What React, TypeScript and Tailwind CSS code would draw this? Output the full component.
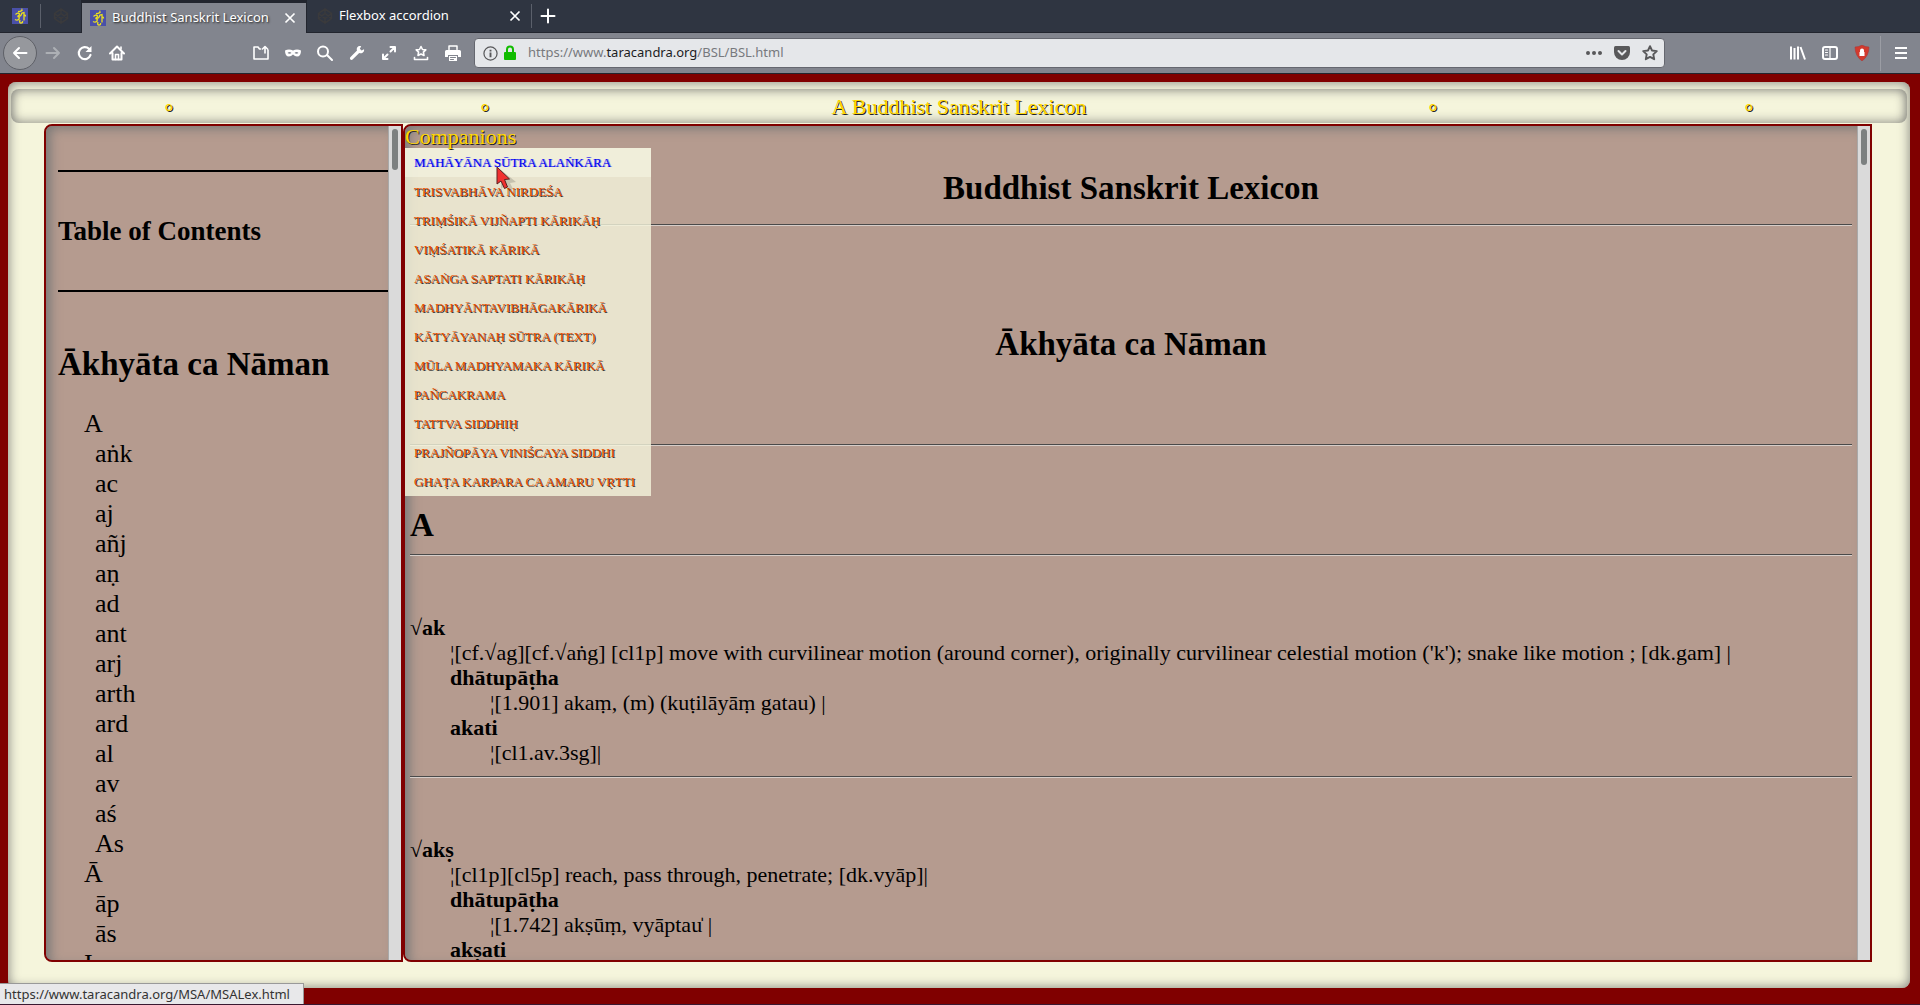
import { clsx } from 'clsx';
import type { ReactNode } from 'react';

const tocEntries = [
  { text: 'A', head: true },
  { text: 'aṅk' },
  { text: 'ac' },
  { text: 'aj' },
  { text: 'añj' },
  { text: 'aṇ' },
  { text: 'ad' },
  { text: 'ant' },
  { text: 'arj' },
  { text: 'arth' },
  { text: 'ard' },
  { text: 'al' },
  { text: 'av' },
  { text: 'aś' },
  { text: 'As' },
  { text: 'Ā', head: true },
  { text: 'āp' },
  { text: 'ās' },
  { text: 'I', head: true },
];

const companions = [
  'Mahāyāna Sūtra Alaṅkāra',
  'Trisvabhāva Nirdeśa',
  'Triṃśikā Vijñapti Kārikāḥ',
  'Viṃśatikā Kārikā',
  'Asaṅga Saptati Kārikāḥ',
  'Madhyāntavibhāgakārikā',
  'Kātyāyanaḥ Sūtra (Text)',
  'Mūla Madhyamaka Kārikā',
  'Pañcakrama',
  'Tattva Siddhiḥ',
  'Prajñopāya Viniścaya Siddhi',
  'Ghaṭa Karpara ca Amaru Vṛtti',
];

const entries = [
  {
    root: '√ak',
    meaning:
      "¦[cf.√ag][cf.√aṅg] [cl1p] move with curvilinear motion (around corner), originally curvilinear celestial motion ('k'); snake like motion ; [dk.gam] |",
    parts: [
      { term: 'dhātupāṭha', text: '¦[1.901] akaṃ, (m) (kuṭilāyāṃ gatau) |' },
      { term: 'akati', text: '¦[cl1.av.3sg]|' },
    ],
  },
  {
    root: '√akṣ',
    meaning: '¦[cl1p][cl5p] reach, pass through, penetrate; [dk.vyāp]|',
    parts: [
      { term: 'dhātupāṭha', text: '¦[1.742] akṣūṃ, vyāptau̍ |' },
      { term: 'akṣati' },
    ],
  },
];

const OmIcon = () => (
  <svg viewBox="0 0 16 16" className="size-4 shrink-0">
    <rect width="16" height="16" fill="#4a50a8" />
    <path
      d="M6 3.500q2.500.5 4.500-1.500M9.500.8l.8.8M3.500 6.500q2.500-2.500 4-.5 0 1.500-2 2.500 2.500 0 1.500 2.500-1.500 2-4 .5M7.500 8.500q1.500-.5 2.500-3.500l2-.5v8M12 7q1.500-.5 1.500 1.500M8 12q-1 3 1 3t1.500-2"
      fill="none"
      stroke="#ece01c"
      strokeWidth="1.300"
    />
  </svg>
);

const CodepenIcon = () => (
  <svg viewBox="0 0 16 16" className="size-4 shrink-0" fill="none" stroke="#3a3a3c" strokeWidth="1.500">
    <path d="M8 1l6.500 4.300v5.400L8 15l-6.500-4.300V5.300zM8 1v4.300M8 15v-4.300M1.500 5.300L8 10.500l6.500-5.200M1.500 10.700L8 5.500l6.500 5.200" />
  </svg>
);

const CloseIcon = () => (
  <svg viewBox="0 0 12 12" className="size-3" stroke="#fff" strokeWidth="1.700">
    <path d="M1.500 1.500l9 9M10.500 1.500l-9 9" />
  </svg>
);

const Icon = ({ children }: { children: ReactNode }) => (
  <svg
    viewBox="0 0 16 16"
    className="size-4"
    fill="none"
    stroke="currentColor"
    strokeWidth="2"
    strokeLinecap="round"
    strokeLinejoin="round"
  >
    {children}
  </svg>
);

const tools = [
  {
    label: 'Open file',
    icon: <path d="M7.500 4H6.500L5 2H1v12h14V5M9.500 4L12 1.500 14.500 4M12 2v6" strokeWidth="1.600" />,
  },
  {
    label: 'Private window',
    icon: (
      <path
        d="M0 5.500Q4 3.500 8 5.500q4-2 8 0 0 6-4 6-2 0-4-2-2 2-4 2-4 0-4-6zM2.500 8q2 1.500 4 0-2-2-4 0zM9.500 8q2 1.500 4 0-2-2-4 0z"
        fill="currentColor"
        fillRule="evenodd"
        stroke="none"
      />
    ),
  },
  { label: 'Find', icon: <path d="M11 6.500a5 5 0 1 1-10 0 5 5 0 0 1 10 0zM10.500 10.500L15 15" /> },
  {
    label: 'Developer',
    icon: (
      <path
        d="M15 4.200l-2.400 1.300-1.800-1.700 1.400-2.600C9.500.3 7 2.500 8 5.500L1.300 12.200c-1.300 1.500.8 3.700 2.300 2.300L10.200 8c3 1 5.500-1.200 4.800-3.800z"
        fill="currentColor"
        stroke="none"
      />
    ),
  },
  { label: 'Full screen', icon: <path d="M9.500 2H14v4.500M14 2L9.500 6.500M6.500 14H2V9.500M2 14l4.500-4.500" /> },
  {
    label: 'Bookmarks',
    icon: (
      <path
        d="M8 1.500l1.500 3 3.300.4-2.400 2.300.6 3.300L8 9l-3 1.500.6-3.300-2.400-2.300 3.300-.4zM1.500 12.500v2h13v-2"
        strokeWidth="1.600"
      />
    ),
  },
  {
    label: 'Print',
    icon: (
      <>
        <path d="M4 4.500V1h8v3.500" strokeWidth="1.500" />
        <path d="M0 6.500Q0 5 1.500 5h13Q16 5 16 6.500V12h-3v-2H3v2H0zM4 11h8v5H4z" fill="currentColor" stroke="none" />
        <path d="M5.500 12.500h5M5.500 14.500h3" stroke="#82858e" strokeWidth="1" />
      </>
    ),
  },
];

const TabBar = () => (
  <div className="flex h-[33px] border-b border-[#22252e] bg-[#2f3541] text-[13px] text-white">
    <button aria-label="Pinned tab" className="flex w-10 items-center justify-center">
      <OmIcon />
    </button>
    <div className="my-1 w-px bg-[#5b606b]" />
    <button aria-label="Pinned CodePen tab" className="flex w-10 items-center justify-center">
      <CodepenIcon />
    </button>
    <div className="-mb-px flex w-[226px] items-center gap-1.5 border-x border-t-3 border-[#22252e] bg-[#82858e] pr-2.5 pl-2">
      <OmIcon />
      <span className="flex-1 whitespace-nowrap [text-shadow:1px_1px_2px_#222]">Buddhist Sanskrit Lexicon</span>
      <button aria-label="Close tab">
        <CloseIcon />
      </button>
    </div>
    <div className="flex w-[224px] items-center gap-1.5 px-2.5">
      <CodepenIcon />
      <span className="flex-1 whitespace-nowrap">Flexbox accordion</span>
      <button aria-label="Close tab">
        <CloseIcon />
      </button>
    </div>
    <div className="my-1 w-px bg-[#5b606b]" />
    <button aria-label="New tab" className="flex w-8 items-center justify-center">
      <Icon>
        <path d="M8 1.500v13M1.500 8h13" />
      </Icon>
    </button>
  </div>
);

const Toolbar = () => (
  <div className="flex h-[41px] items-center border-b border-[#22252e] bg-[#82858e] text-white">
    <div className="flex w-[253px] items-center gap-4 pl-[3px]">
      <button
        aria-label="Back"
        className="flex size-[34px] items-center justify-center rounded-full border border-[#5e6067] bg-[#96989d]"
      >
        <Icon>
          <path d="M14.500 8H2M7 3L2 8l5 5" />
        </Icon>
      </button>
      <button aria-label="Forward" className="-ml-2 text-[#adb0b5]">
        <Icon>
          <path d="M1.500 8H14M9 3l5 5-5 5" />
        </Icon>
      </button>
      <button aria-label="Reload">
        <Icon>
          <path d="M13.500 10A6 6 0 1 1 12 3.800" strokeWidth="2.200" />
          <path d="M14.500 1v6h-6z" fill="currentColor" stroke="none" />
        </Icon>
      </button>
      <button aria-label="Home">
        <Icon>
          <path d="M1 8.500L8 1.500l7 7M3.500 8v6.500h9V8" />
          <path d="M6.500 14.500V9.500h3v5M12 2v2" strokeWidth="1.600" />
        </Icon>
      </button>
    </div>
    <div className="flex gap-4">
      {tools.map((tool) => (
        <button key={tool.label} aria-label={tool.label}>
          <Icon>{tool.icon}</Icon>
        </button>
      ))}
    </div>
    <div className="ml-[13px] flex h-[30px] flex-1 items-center rounded-sm border border-[#65676f] bg-[#e5e7ea] pr-1.5 pl-2 text-[#58585a]">
      <svg viewBox="0 0 16 16" className="size-[15px]" fill="none" stroke="currentColor" strokeWidth="1.300">
        <circle cx="8" cy="8" r="7" />
        <path d="M8 7v5M8 4v1.800" strokeWidth="2" />
      </svg>
      <svg viewBox="0 0 12 16" className="ml-1.5 h-4 w-3 text-[#12bc00]">
        <rect y="7" width="12" height="8" rx="1" fill="currentColor" />
        <path d="M3 8V4.500a3 3 0 0 1 6 0V8" fill="none" stroke="currentColor" strokeWidth="2" />
      </svg>
      <a href="https://www.taracandra.org/BSL/BSL.html" className="ml-3 flex-1 text-[13px] text-[#77797d]">
        https://www.<span className="text-[#1c1c1e]">taracandra.org</span>/BSL/BSL.html
      </a>
      <div className="flex items-center gap-3">
        <button aria-label="Page actions">
          <Icon>
            <path d="M2 8h.01M8 8h.01M14 8h.01" strokeWidth="4" />
          </Icon>
        </button>
        <button aria-label="Save to Pocket">
          <Icon>
            <path d="M0 2.500Q0 1 1.500 1h13Q16 1 16 2.500V7a8 8 0 0 1-16 0z" fill="currentColor" stroke="none" />
            <path d="M4.500 6L8 9.500 11.500 6" stroke="#e5e7ea" />
          </Icon>
        </button>
        <button aria-label="Bookmark this page">
          <Icon>
            <path d="M8 1.200l2 4.300 4.800.6-3.500 3.300.9 4.800L8 11.900l-4.200 2.300.9-4.800L1.200 6.100 6 5.500z" strokeWidth="1.900" />
          </Icon>
        </button>
      </div>
    </div>
    <div className="ml-[125px] flex items-center gap-4">
      <button aria-label="Library">
        <Icon>
          <path d="M1 1.500v13M4.500 3v11.500M8 1.500v13M10.500 2l4.500 12.500" strokeLinecap="butt" />
        </Icon>
      </button>
      <button aria-label="Sidebars">
        <Icon>
          <rect x="1" y="2" width="14" height="12" rx="2" />
          <path d="M8 2v12M3.500 5h2M3.500 7.500h2M3.500 10h2" strokeWidth="1.200" />
        </Icon>
      </button>
      <button aria-label="Blocker">
        <svg viewBox="0 0 16 16" className="size-4">
          <path d="M8 0q3 2 7 2 0 9-7 14Q1 11 1 2q4 0 7-2z" fill="#d23a2e" stroke="#a33" strokeWidth=".5" />
          <path d="M6 7V5.500a2 2 0 0 1 4 0V7h.5v4h-5V7z" fill="#fff" />
        </svg>
      </button>
    </div>
    <div className="ml-2.5 h-[35px] w-px bg-[#9b9da4]" />
    <button aria-label="Menu" className="mr-[11px] ml-3">
      <Icon>
        <path d="M2 3h12M2 8h12M2 13h12" strokeLinecap="butt" />
      </Icon>
    </button>
  </div>
);

const Scrollbar = ({ thumb }: { thumb: string }) => (
  <div className="w-[13px] shrink-0 border-l border-[#a9a9a9] bg-[#dadada] pt-[3px] pl-[3px]">
    <div className={clsx('w-1.5 rounded-full bg-[#7c8080]', thumb)} />
  </div>
);

const Rule = () => <hr className="h-0.5 border-t border-b border-t-[#4a4a4a] border-b-[#d6cdc8]" />;

const PageHeader = () => (
  <header className="mx-[3px] mt-[7px] flex h-[34px] items-center rounded-lg text-center text-[22px] text-[#ffd700] shadow-[inset_0_0_12px_#7c7c78] [text-shadow:1px_1px_0_#222]">
    <span className="flex-1">∘</span>
    <span className="flex-1">∘</span>
    <h1 className="flex-2">A Buddhist Sanskrit Lexicon</h1>
    <span className="flex-1">∘</span>
    <span className="flex-1">∘</span>
  </header>
);

const Contents = () => (
  <aside className="flex w-[359px] shrink-0 overflow-hidden rounded-l-lg border-2 border-[#800000] bg-[#b59b8f]">
    <div className="flex-1 overflow-hidden pt-11 pl-3 shadow-[inset_6px_4px_12px_-2px_#777]">
      <hr className="border-t-2 border-black" />
      <h2 className="my-11 text-[27px] leading-[30px] font-bold">Table of Contents</h2>
      <hr className="border-t-2 border-black" />
      <h2 className="mt-[54px] mb-[27px] text-[33px] leading-9 font-bold">Ākhyāta ca Nāman</h2>
      <ul className="pl-[26px] text-[26px] leading-[30px]">
        {tocEntries.map((entry) => (
          <li key={entry.text} className={clsx(!entry.head && 'pl-[11px]')}>
            <a href={`#${entry.text}`}>{entry.text}</a>
          </li>
        ))}
      </ul>
    </div>
    <Scrollbar thumb="h-[41px]" />
  </aside>
);

const Companions = () => (
  <nav className="absolute top-0 left-0 z-10 w-[246px]">
    <button className="block h-[22px] text-[22px] leading-5 text-[#ffd700] [text-shadow:1px_1px_0_#222]">
      Companions
    </button>
    <ul className="bg-[#f5f5dc]/80 text-[13px] leading-[29px] uppercase">
      {companions.map((name, index) => (
        <li key={name} className={clsx('px-[9px] whitespace-nowrap', index === 0 && 'bg-[#f5f5e2]/60')}>
          <a
            href={`#companion-${index + 1}`}
            className={
              index === 0
                ? 'text-[#0000ee] [text-shadow:1px_0_0_#8080ee]'
                : 'text-[#e65100] [text-shadow:1px_1px_0_#333]'
            }
          >
            {name}
          </a>
        </li>
      ))}
    </ul>
    <svg viewBox="0 0 22 26" className="absolute top-10 left-[91px] h-[26px] w-[22px]">
      <path d="M5 4l15 12-6 1 3 6-4 2-4-6-4 4z" fill="#000" opacity=".15" />
      <path d="M1 1l12.500 12-5 .5 3 7.500-3 1.500-3.500-7.500L1 18z" fill="#f03030" stroke="#5a2020" />
    </svg>
  </nav>
);

const Lexicon = () => (
  <main className="relative flex flex-1 overflow-hidden rounded-l-lg border-2 border-[#800000] bg-[#b59b8f]">
    <Companions />
    <div className="flex-1 overflow-hidden px-[5px] text-[22px] leading-[25px] shadow-[inset_6px_4px_12px_-2px_#777]">
      <h2 className="mt-11 mb-[18px] text-center text-[33px] leading-9 font-bold">Buddhist Sanskrit Lexicon</h2>
      <Rule />
      <h2 className="mt-[100px] mb-[82px] text-center text-[33px] leading-9 font-bold">Ākhyāta ca Nāman</h2>
      <Rule />
      <h2 className="mt-[61px] mb-[11px] text-[33px] leading-9 font-bold">A</h2>
      <Rule />
      {entries.map((entry) => (
        <article key={entry.root}>
          <dl className="pt-[59px] pb-[11px]">
            <dt className="font-bold">{entry.root}</dt>
            <dd className="pl-10">{entry.meaning}</dd>
            {entry.parts.map((part) => (
              <dd key={part.term} className="pl-10">
                <b>{part.term}</b>
                {part.text && <p className="pl-10">{part.text}</p>}
              </dd>
            ))}
          </dl>
          <Rule />
        </article>
      ))}
    </div>
    <Scrollbar thumb="h-9" />
  </main>
);

export default function App() {
  return (
    <div className="relative flex h-screen flex-col overflow-hidden border-b border-[#3a1830] bg-[#800000] font-['Noto_Sans',sans-serif]">
      <TabBar />
      <Toolbar />
      <div className="mt-2 mr-2.5 mb-4 ml-2 flex min-h-0 flex-1 flex-col rounded-lg bg-[#f5f5dc] font-['Liberation_Serif',serif] text-black shadow-[inset_0_0_12px_#7c7c78]">
        <PageHeader />
        <div className="mt-px mr-[38px] mb-[26px] ml-9 flex min-h-0 flex-1">
          <Contents />
          <Lexicon />
        </div>
      </div>
      <div className="absolute bottom-0 left-0 z-20 w-[304px] border-t border-r border-[#999] bg-[#e8e8ea] px-1 text-[13px] leading-5 text-[#333]">
        https://www.taracandra.org/MSA/MSALex.html
      </div>
    </div>
  );
}
